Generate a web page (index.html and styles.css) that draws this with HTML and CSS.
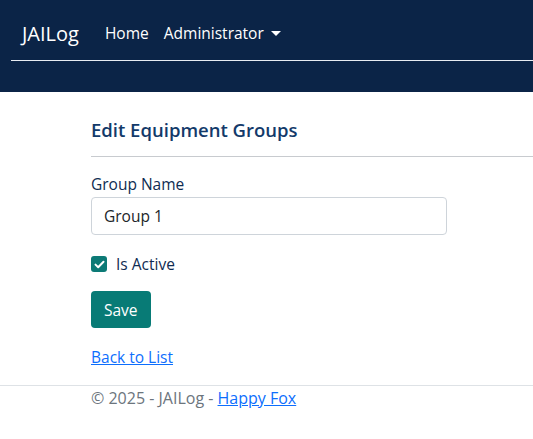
FILE: index.html
```html
<!DOCTYPE html>
<html>
<head>
<meta charset="utf-8">
<link rel="stylesheet" href="styles.css">
</head>
<body>
<header class="navbar">
  <div class="nav-top">
    <span class="brand">JAILog</span>
    <a class="nav-link">Home</a>
    <a class="nav-link">Administrator <span class="caret"></span></a>
  </div>
  <div class="nav-line"></div>
</header>
<main class="content">
  <h4 class="title">Edit Equipment Groups</h4>
  <hr class="rule">
  <form class="form">
    <label class="label">Group Name</label>
    <input class="input" type="text" value="Group 1">
    <div class="check">
      <span class="box"><svg width="11" height="9" viewBox="0 0 11 9"><path d="M1.5 4.6 L4.2 7.2 L9.5 1.8" fill="none" stroke="#fff" stroke-width="2" stroke-linecap="round" stroke-linejoin="round"/></svg></span>
      <span class="check-label">Is Active</span>
    </div>
    <button class="btn" type="button">Save</button>
  </form>
  <a class="back" href="#">Back to List</a>
</main>
<footer class="footer">
  <div class="footer-text">© 2025 - JAILog - <a href="#">Happy Fox</a></div>
</footer>
</body>
</html>
```
FILE: styles.css
```css
* { box-sizing: border-box; }
html, body { margin: 0; padding: 0; }
body {
  font-family: "Open Sans", "Noto Sans", sans-serif;
  font-size: 15.5px;
  color: #0f2c52;
  background: #fff;
  width: 533px;
  overflow: hidden;
}
.navbar {
  background: #0b2447;
  height: 92px;
  padding-left: 11px;
}
.nav-top {
  height: 60px;
  display: flex;
  align-items: center;
  padding-left: 11px;
  padding-top: 6px;
}
.brand {
  color: #fff;
  font-size: 20px;
  margin-right: 26px;
}
.nav-link {
  color: #fff;
  font-size: 15.5px;
  margin-right: 15px;
  display: flex;
  align-items: center;
}
.caret {
  display: inline-block;
  width: 0; height: 0;
  border-left: 5px solid transparent;
  border-right: 5px solid transparent;
  border-top: 5px solid #fff;
  margin-left: 7px;
}
.nav-line {
  height: 1px;
  background: #e8ecf2;
}
.content {
  padding-left: 91px;
  padding-top: 26px;
}
.title {
  margin: 0;
  font-size: 18.5px;
  font-weight: 600;
  line-height: 24px;
  color: #133a6a;
}
.rule {
  margin: 14px 0 0 0;
  border: 0;
  border-top: 1px solid #c8cbcf;
}
.form {
  display: flex;
  flex-direction: column;
  align-items: flex-start;
  padding-top: 17px;
}
.label {
  line-height: 20px;
  margin-bottom: 3px;
}
.input {
  width: 356px;
  height: 38px;
  border: 1px solid #ced4da;
  border-radius: 4px;
  padding: 0 12px;
  font-family: inherit;
  font-size: 15.5px;
  color: #212529;
}
.check {
  display: flex;
  align-items: center;
  margin-top: 20px;
  height: 18px;
}
.box {
  width: 16px; height: 16px;
  background: #0c7a76;
  border-radius: 3px;
  display: flex;
  align-items: center;
  justify-content: center;
  margin-right: 9px;
}
.check-label { line-height: 18px; }
.btn {
  margin-top: 18px;
  background: #087b76;
  color: #fff;
  border: 0;
  border-radius: 4px;
  height: 37px;
  padding: 0 13px;
  font-family: inherit;
  font-size: 15.5px;
}
.back {
  display: inline-block;
  margin-top: 18px;
  color: #0d6efd;
  line-height: 22px;
}
.footer {
  margin-top: 17px;
  border-top: 1px solid #dee2e6;
  padding-left: 91px;
  padding-top: 1px;
}
.footer-text {
  color: #6c757d;
  line-height: 22px;
  font-size: 16px;
}
.footer-text a { color: #0d6efd; }
```
